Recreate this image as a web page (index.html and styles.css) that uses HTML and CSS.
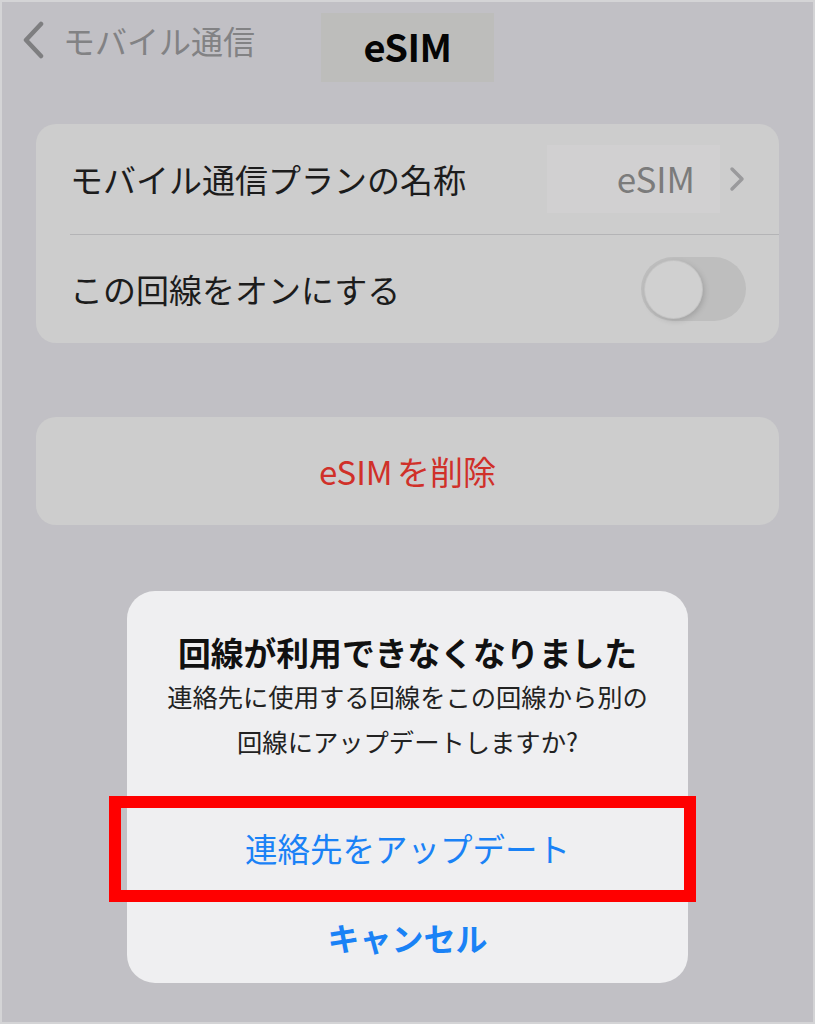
FILE: index.html
```html
<!DOCTYPE html>
<html lang="ja">
<head>
<meta charset="utf-8">
<link rel="stylesheet" href="styles.css">
</head>
<body>
<div class="screen">
  <header class="nav">
    <div class="back">
      <svg class="back-chev" width="24" height="38" viewBox="0 0 24 38"><path d="M20 3 L5 19 L20 35" fill="none" stroke="#7e7e80" stroke-width="4.5" stroke-linecap="round" stroke-linejoin="round"/></svg>
      <span class="back-text">モバイル通信</span>
    </div>
    <div class="title-box"><span class="title">eSIM</span></div>
    <div></div>
  </header>

  <section class="card">
    <div class="row row-first">
      <span class="label">モバイル通信プランの名称</span>
      <div class="value-wrap">
        <div class="value-box"><span class="value">eSIM</span></div>
        <svg class="chev" width="16" height="26" viewBox="0 0 16 26"><path d="M3 3 L13 13 L3 23" fill="none" stroke="#9a9a9c" stroke-width="3.5" stroke-linecap="round" stroke-linejoin="round"/></svg>
      </div>
    </div>
    <div class="sep"></div>
    <div class="row row-second">
      <span class="label">この回線をオンにする</span>
      <div class="toggle"><div class="knob"></div></div>
    </div>
  </section>

  <section class="card card-delete">
    <span class="delete">eSIM を削除</span>
  </section>

  <section class="dialog">
    <div class="dialog-body">
      <div class="dialog-title">回線が利用できなくなりました</div>
      <div class="dialog-msg">連絡先に使用する回線をこの回線から別の<br>回線にアップデートしますか?</div>
    </div>
    <div class="btn btn-update">連絡先をアップデート<div class="highlight"></div></div>
    <div class="btn btn-cancel">キャンセル</div>
  </section>
</div>
</body>
</html>
```

FILE: styles.css
```css
* { box-sizing: border-box; }
html, body { margin: 0; padding: 0; }
body {
  font-family: "Noto Sans CJK JP", "Noto Sans", sans-serif;
  background: #c1c0c5;
}
.screen {
  width: 815px;
  height: 1024px;
  background: #c1c0c5;
  border: 2px solid #d4d4d6;
  overflow: hidden;
}
.nav {
  display: grid;
  grid-template-columns: 1fr 173px 1fr;
  align-items: center;
  padding-top: 11px;
  height: 80px;
}
.back {
  display: flex;
  align-items: center;
  padding-left: 19px;
  gap: 18px;
  margin-top: -15px;
}
.back-text {
  font-size: 32px;
  color: #828284;
  line-height: 40px;
}
.title-box {
  height: 69px;
  background: #bdbdbb;
  display: flex;
  align-items: center;
  justify-content: center;
}
.title {
  font-size: 38px;
  font-weight: 700;
  color: #050505;
  line-height: 1;
  margin-top: -4px;
  letter-spacing: -0.5px;
}
.card {
  margin: 42px 34px 0;
  background: #cdcdcd;
  border-radius: 20px;
}
.row {
  display: flex;
  align-items: center;
  justify-content: space-between;
  padding: 0 33px 0 34px;
}
.row-first { height: 110px; }
.row-second { height: 108px; }
.label {
  font-size: 33px;
  color: #1c1c1c;
  line-height: 40px;
}
.sep {
  height: 1px;
  background: #b4b4b6;
  margin-left: 34px;
}
.value-wrap {
  display: flex;
  align-items: center;
  gap: 9px;
}
.value-box {
  width: 173px;
  height: 68px;
  background: #d1d0d1;
  display: flex;
  align-items: center;
  justify-content: flex-end;
  padding-right: 25px;
}
.value {
  font-size: 35px;
  color: #7b7b7b;
  line-height: 1;
  margin-top: -3px;
}
.chev { margin-right: 1px; }
.toggle {
  width: 105px;
  height: 64px;
  border-radius: 32px;
  background: #bebebe;
  padding: 4px;
}
.knob {
  width: 57px;
  height: 57px;
  border-radius: 50%;
  background: #d0d0d0;
  box-shadow: 0 0 0 1px #c4c4c4, 2px 2px 6px rgba(0,0,0,0.18);
}
.card-delete {
  margin-top: 74px;
  height: 108px;
  display: flex;
  align-items: center;
  justify-content: center;
}
.delete {
  font-size: 33px;
  color: #d03029;
  line-height: 40px;
  word-spacing: -3px;
}
.dialog {
  width: 561px;
  margin: 66px auto 0;
  background: #efeff1;
  border-radius: 28px;
}
.dialog-body {
  padding: 41px 20px 38px;
  text-align: center;
}
.dialog-title {
  font-size: 32.8px;
  font-weight: 700;
  color: #111;
  line-height: 40px;
}
.dialog-msg {
  margin-top: 2px;
  font-size: 25.3px;
  color: #222;
  line-height: 45px;
}
.btn {
  height: 91px;
  border-top: 1px solid #d6d6da;
  display: flex;
  align-items: center;
  justify-content: center;
  color: #1a82f6;
  font-size: 32.5px;
  line-height: 40px;
}
.btn-update { position: relative; }
.btn-cancel {
  font-weight: 700;
  font-size: 32px;
  height: 90px;
  padding-bottom: 4px;
}
.highlight {
  position: absolute;
  left: -18px;
  top: -7px;
  width: 587px;
  height: 106px;
  border: 12px solid #ff0000;
}
```
